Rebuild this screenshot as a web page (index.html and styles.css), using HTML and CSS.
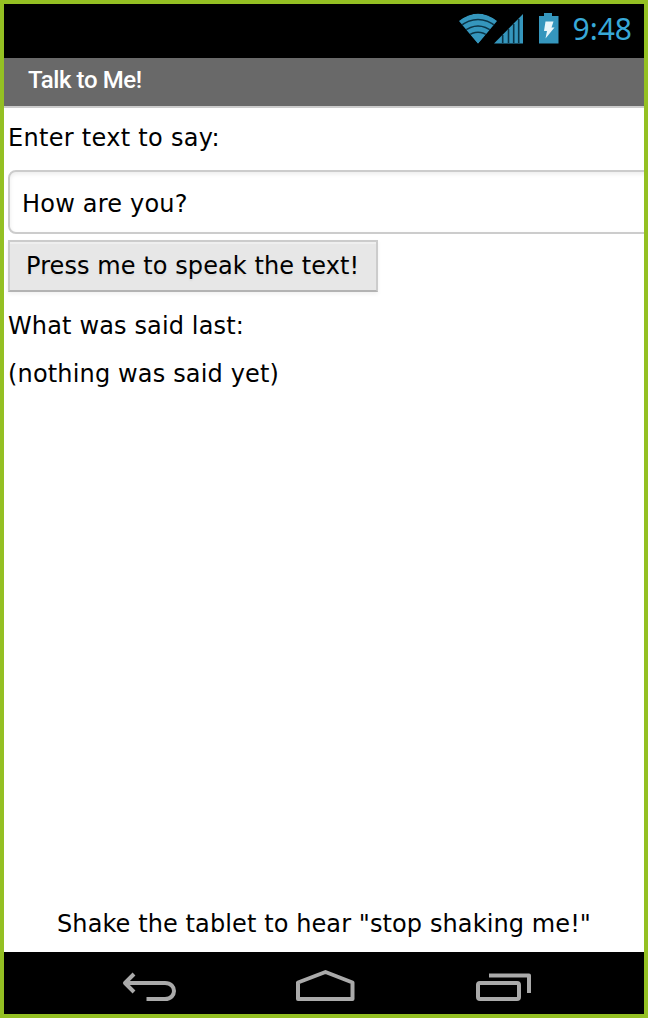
FILE: index.html
```html
<!DOCTYPE html>
<html lang="en">
<head>
<meta charset="utf-8">
<title>Talk to Me!</title>
<link rel="stylesheet" href="styles.css">
</head>
<body>
<div class="phone">
  <header class="status">
    <svg class="status-icons" width="104" height="54" viewBox="0 0 104 54" aria-hidden="true">
      <defs><clipPath id="fan"><path d="M1 17 Q20 2 39 17 L20 40Z"/></clipPath></defs>
      <g clip-path="url(#fan)">
        <path class="blue" d="M0 17 Q20 2 40 17 L20 40Z"/>
        <g class="gap-lines"><path d="M1 23 Q20 8 39 23"/><path d="M5 28 Q20 16 35 28"/><path d="M9 32.500 Q20 24 31 32.500"/></g>
      </g>
      <path class="blue" d="M36 39.500 L65 10V39.500Z"/>
      <path class="gap-lines" d="M44.700 39V31M50.500 39V25M55.700 39V20M60.700 39V15"/>
      <path class="blue" d="M81 12h5V9h8v3h6.500v27.500H81Z"/>
      <path class="bolt" d="M87.500 17.500h8l-2 6h3l-9 11 1.500-7.500H86Z"/>
    </svg>
    <span class="clock">9:48</span>
  </header>
  <h1 class="title">Talk to Me!</h1>
  <main class="screen">
    <label class="label enter" for="say">Enter text to say:</label>
    <input class="entry" id="say" type="text" value="How are you?">
    <button class="speak" type="button">Press me to speak the text!</button>
    <p class="label heard">What was said last:</p>
    <p class="label none">(nothing was said yet)</p>
    <p class="label hint">Shake the tablet to hear "stop shaking me!"</p>
  </main>
  <nav class="nav">
    <svg width="640" height="62" viewBox="0 0 640 62" aria-hidden="true">
      <g class="nav-lines">
        <path d="M121 31H161C173 31 173 47 161 47H142.500"/>
        <path d="M130 22L121 31L130 40"/>
        <path d="M294 30.500L321.500 20L348.500 30.500V47H294Z"/>
        <rect x="474" y="31" width="41" height="16" rx="2"/>
        <path d="M485 23.500H525V41"/>
      </g>
    </svg>
  </nav>
</div>
</body>
</html>
```
FILE: styles.css
```css
* { box-sizing: border-box; }
body { margin: 0; }
.phone {
  width: 648px;
  height: 1018px;
  border: 4px solid #94c023;
  background: #fff;
  color: #000;
  font: 24px/48px Verdana, "DejaVu Sans", sans-serif;
  display: flex;
  flex-direction: column;
  overflow: hidden;
}
.status {
  height: 54px;
  flex: none;
  background: #000;
  display: flex;
  justify-content: flex-end;
  padding-right: 12px;
}
.status-icons { margin-right: 10px; }
.blue { fill: #3596bd; }
.gap-lines { fill: none; stroke: #0b3548; stroke-width: 1.6; }
.bolt { fill: #e9f6fa; }
.clock {
  color: #38a9d8;
  font: 30px/50px "Noto Sans", sans-serif;
}
.title {
  margin: 0;
  height: 50px;
  flex: none;
  padding-left: 24px;
  background: #696969;
  border-bottom: 2px solid #ccc;
  color: #fff;
  font: 500 24px/44px Roboto, sans-serif;
  letter-spacing: -0.4px;
}
.screen {
  flex: 1;
  min-height: 0;
  padding: 6px 0 4px 4px;
  display: flex;
  flex-direction: column;
  align-items: flex-start;
}
.label { margin: 0; height: 48px; white-space: nowrap; }
.enter { letter-spacing: 0.3px; }
.entry {
  width: 660px;
  height: 64px;
  flex: none;
  margin-top: 8px;
  padding: 4px 12px 0;
  border: 2px solid #ccc;
  border-radius: 8px;
  background: #fff;
  box-shadow: inset 0 2px 4px rgba(0, 0, 0, .08);
  color: #000;
  font: inherit;
  letter-spacing: 0.2px;
}
.speak {
  width: 370px;
  height: 52px;
  flex: none;
  margin-top: 6px;
  padding: 0 0 2px 16px;
  border: 2px solid #ccc;
  border-bottom-color: #b3b3b3;
  background: #e7e7e7;
  box-shadow: inset 0 2px #efefef, 0 2px 4px rgba(0, 0, 0, .06);
  color: #000;
  font: inherit;
  letter-spacing: 0.08px;
  text-align: left;
  white-space: nowrap;
  text-shadow: 0 2px 2px rgba(0, 0, 0, .06);
}
.heard { margin-top: 10px; letter-spacing: 0.14px; }
.none { letter-spacing: 0.16px; }
.hint { margin: auto 0 0 49px; letter-spacing: 0.1px; }
.nav { height: 62px; flex: none; background: #000; }
.nav svg { display: block; }
.nav-lines {
  fill: none;
  stroke: #aaa;
  stroke-width: 4;
  stroke-linejoin: round;
}
```
